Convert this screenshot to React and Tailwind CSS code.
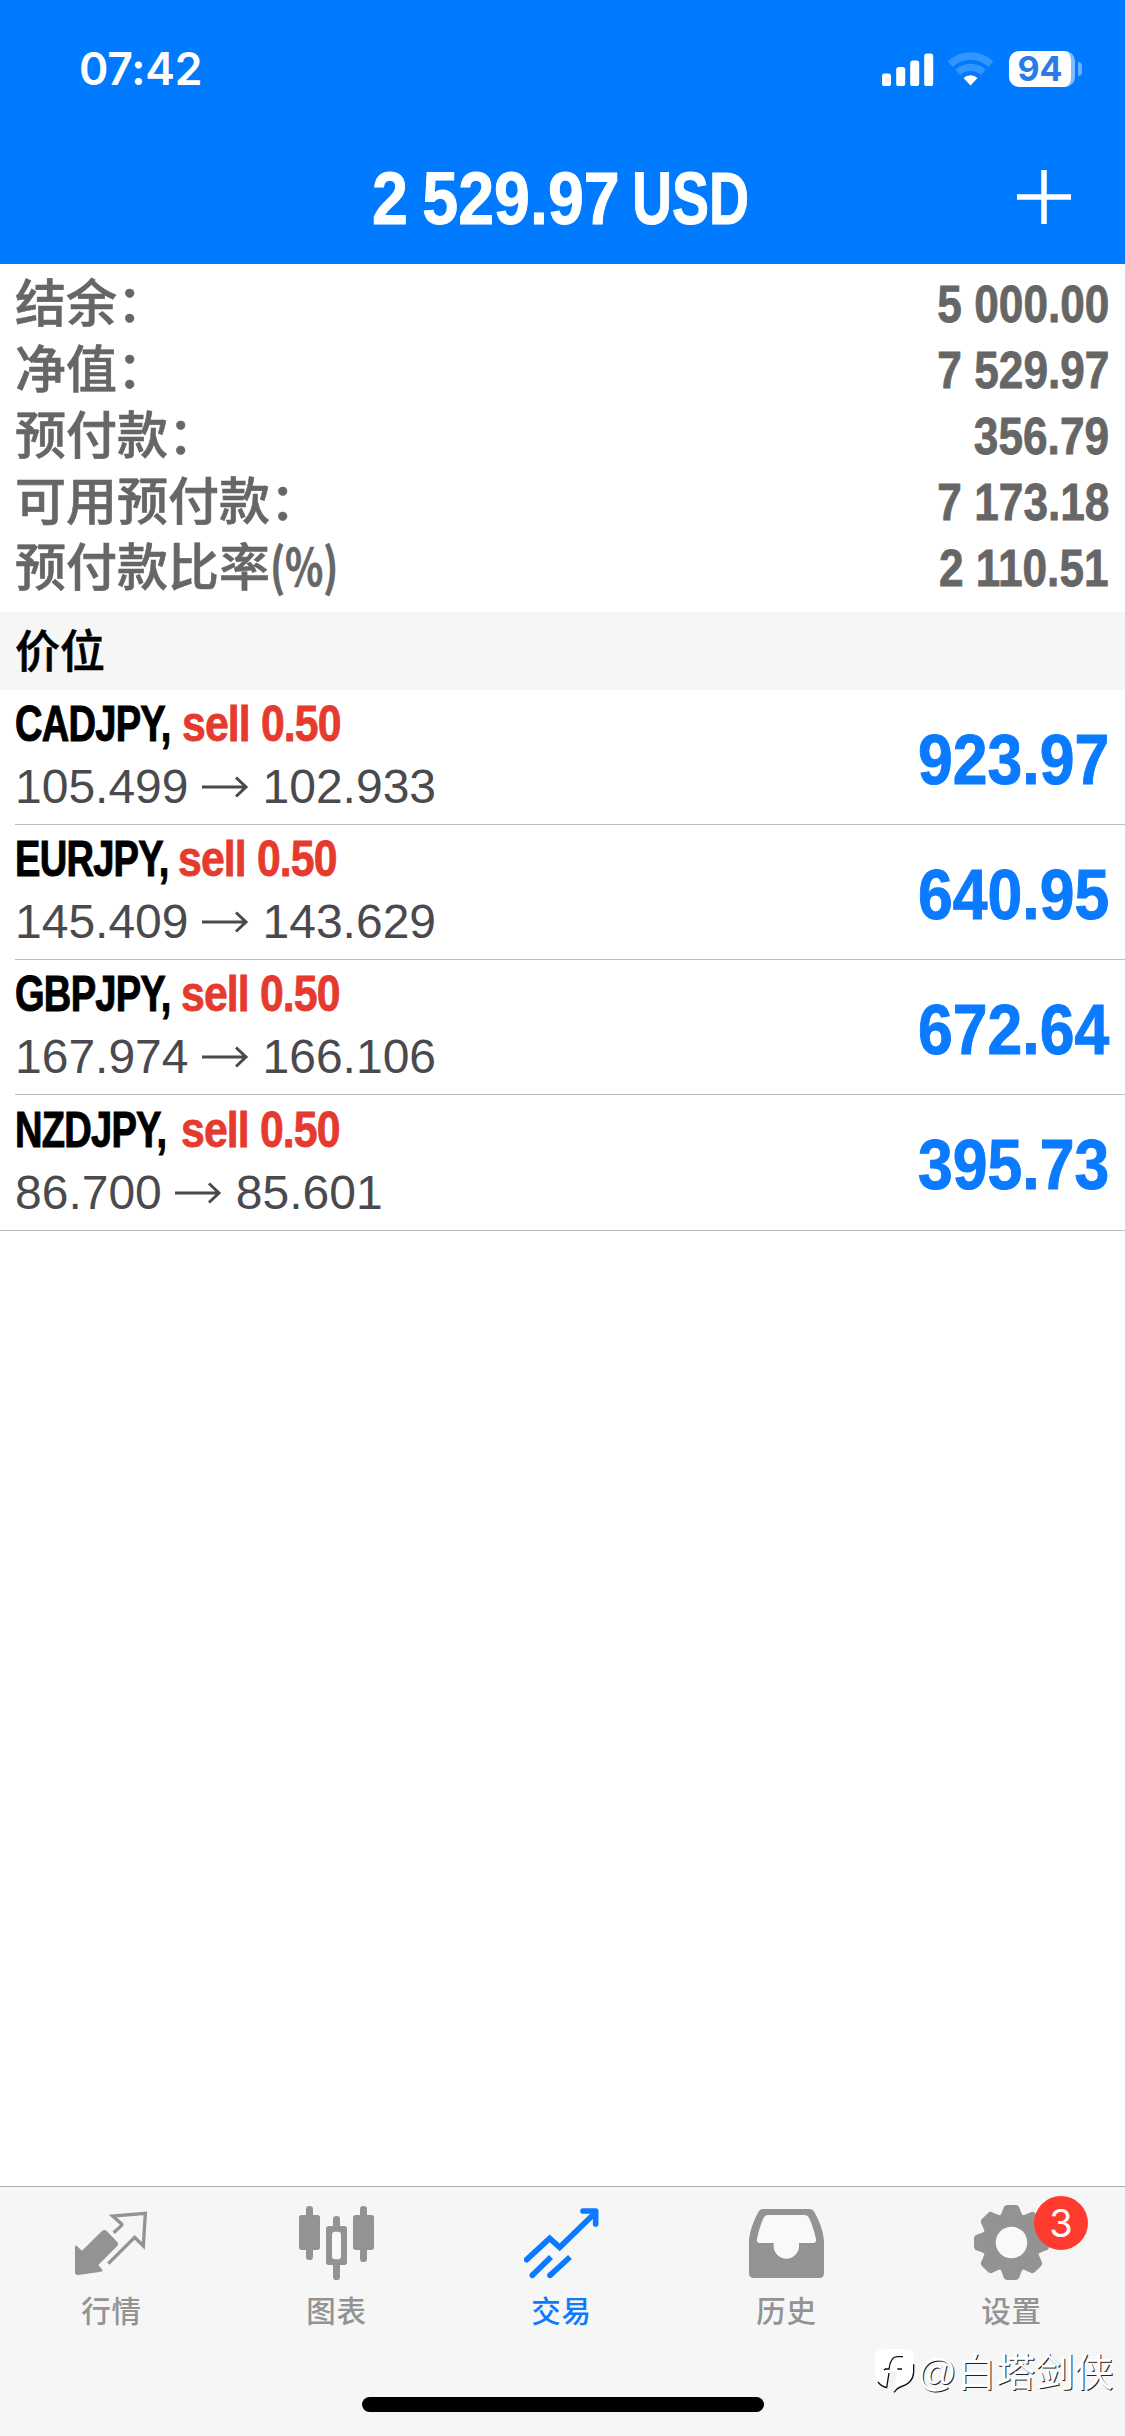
const account = [
  { label: '结余：', value: '5 000.00' },
  { label: '净值：', value: '7 529.97' },
  { label: '预付款：', value: '356.79' },
  { label: '可用预付款：', value: '7 173.18' },
  { label: '预付款比率', unit: '(%)', value: '2 110.51' },
];

// kern pulls the side text back towards the condensed symbol
const positions = [
  { symbol: 'CADJPY', kern: '-ml-[37px]', side: 'sell 0.50', open: '105.499', current: '102.933', profit: '923.97' },
  { symbol: 'EURJPY', kern: '-ml-[38px]', side: 'sell 0.50', open: '145.409', current: '143.629', profit: '640.95' },
  { symbol: 'GBPJPY', kern: '-ml-[38px]', side: 'sell 0.50', open: '167.974', current: '166.106', profit: '672.64' },
  { symbol: 'NZDJPY', kern: '-ml-[33px]', side: 'sell 0.50', open: '86.700', current: '85.601', profit: '395.73' },
];

function StatusBar() {
  return (
    <div className="flex h-[138px] items-center justify-between pl-[79px] pr-[43px]">
      <span className="font-['Inter',sans-serif] text-[44.5px] leading-none font-semibold tracking-[-0.2px]">07:42</span>
      <div className="flex items-center">
        <svg width="52" height="33" viewBox="0 0 52 33" fill="#fff">
          <rect x="0" y="20.5" width="9" height="12.5" rx="2.6" />
          <rect x="14.2" y="14" width="9" height="19" rx="2.6" />
          <rect x="28.2" y="7.5" width="9" height="25.5" rx="2.6" />
          <rect x="42.2" y="0.5" width="9" height="32.5" rx="2.6" />
        </svg>
        <svg className="ml-[14px]" width="46" height="34" viewBox="0 0 46 34" fill="none">
          <path d="M2.2 12.2a29.5 29.5 0 0 1 40.6 0" stroke="#3395ff" strokeWidth="7.5" />
          <path d="M9.6 20.4a18.8 18.8 0 0 1 25.8 0" stroke="#3395ff" strokeWidth="7.2" />
          <path d="M15.5 26a10.5 10.5 0 0 1 14 0l-7 7.5z" fill="#fff" />
        </svg>
        <div className="ml-[15px] flex items-center">
          <div className="flex h-9 w-[66px] items-center justify-center rounded-[10px] border-r-4 border-[#80bcff] bg-white">
            <span className="font-['Inter',sans-serif] text-[34px] leading-[36px] font-bold text-[#2a7be8]">94</span>
          </div>
          <div className="ml-[3px] h-[14px] w-[4px] rounded-r-full bg-[#66b0ff]" />
        </div>
      </div>
    </div>
  );
}

function Header() {
  return (
    <header className="h-[264px] bg-[#007aff] text-white">
      <StatusBar />
      <div className="flex h-[118px] items-center pl-[372px]">
        <h1 className="flex pt-[2px] text-[75px] leading-none font-bold whitespace-nowrap [-webkit-text-stroke:1px_#fff]">
          <span className="w-[260px] origin-left scale-x-[0.86] [word-spacing:-4px]">2 529.97</span>
          <span className="w-[120px] origin-left scale-x-[0.74]">USD</span>
        </h1>
        <svg className="mr-[53px] ml-auto" width="56" height="56" viewBox="0 0 56 56">
          <path d="M28 1v54M1 28h54" stroke="#fff" strokeWidth="5.5" />
        </svg>
      </div>
    </header>
  );
}

function PositionRow({ position, last }) {
  return (
    <li className={last ? 'h-[136px] border-b border-[#bebec0]' : 'ml-[15px] h-[135px] border-b border-[#bebec0]'}>
      <div className={last ? 'flex h-full items-center justify-between pr-4 pl-[15px]' : 'flex h-full items-center justify-between pr-4'}>
        <div>
          <div className="flex text-[50px] leading-[60px] font-bold tracking-[-1px] whitespace-nowrap">
            <span className="origin-left scale-x-[0.762] [-webkit-text-stroke:1px_#000]">{position.symbol},</span>
            <span className={`${position.kern} origin-left scale-x-[0.855] text-[#e63a2e] [-webkit-text-stroke:0.8px_#e63a2e]`}>
              {position.side}
            </span>
          </div>
          <div className="flex h-[66px] items-center text-[48px] leading-none text-[#4a4a4e]">
            <span>{position.open}</span>
            <svg className="mx-[13px]" width="48" height="24" viewBox="0 0 48 24" fill="none" stroke="#4a4a4e" strokeWidth="3">
              <path d="M0 12h44M34 2.5l10 9.5-10 9.5" />
            </svg>
            <span>{position.current}</span>
          </div>
        </div>
        <span className="origin-right scale-x-[0.88] pt-[4px] text-[71px] leading-none font-bold text-[#0a7aff] [-webkit-text-stroke:1px_#0a7aff]">
          {position.profit}
        </span>
      </div>
    </li>
  );
}

function QuotesIcon() {
  return (
    <svg width="75" height="75" viewBox="222 105 225 225">
      <path
        d="M228 226l18 16 60-59q8-6 15 1l30 31q6 7 0 14l-56 56 12 14q2 6-4 6l-68 10q-10 1-10-8v-77z"
        fill="#939393"
      />
      <path d="M341 188l23-21q3-3 0-6l-26-23 98-8-6 98-26-26-79 79" fill="none" stroke="#939393" strokeWidth="10" />
    </svg>
  );
}

function ChartIcon() {
  return (
    <svg width="75" height="75" viewBox="897 105 225 225" fill="#939393">
      <rect x="918" y="108" width="21" height="162" rx="10" />
      <rect x="897" y="135" width="63" height="105" rx="8" />
      <rect x="999" y="138" width="21" height="192" rx="10" />
      <rect x="978" y="168" width="63" height="117" rx="8" />
      <rect x="996" y="185" width="27" height="83" rx="9" fill="#f9f9f9" />
      <rect x="1080" y="108" width="21" height="168" rx="10" />
      <rect x="1059" y="135" width="63" height="105" rx="8" />
    </svg>
  );
}

function TradeIcon() {
  return (
    <svg width="75" height="75" viewBox="222 105 225 225" fill="none" stroke="#0a7aff" strokeWidth="17">
      <path d="M230 269l69-64 30 27 106-103" strokeLinejoin="miter" strokeLinecap="round" />
      <path d="M399 123h38v39" strokeLinecap="round" strokeLinejoin="round" />
      <path d="M247 316l56-55M300 316l60-55" />
      <g fill="#0a7aff" stroke="none">
        <circle cx="247" cy="316" r="8.5" />
        <circle cx="300" cy="316" r="8.5" />
      </g>
    </svg>
  );
}

function HistoryIcon() {
  return (
    <svg width="75" height="75" viewBox="897 105 225 225">
      <path
        fill="#939393"
        d="M940 117h138q10 0 15 9c18 32 29 65 29 90v94q0 14-14 14H911q-14 0-14-14v-94c0-25 11-58 28-90q5-9 15-9z"
      />
      <path
        fill="#f9f9f9"
        d="M953 135h111q9 0 13 8c9 20 17 42 21 65q1 11-8 11h-43v9a38 38 0 0 1-76 0v-9h-43q-9 0-7-11c4-23 11-45 20-65q4-8 12-8z"
      />
    </svg>
  );
}

function SettingsIcon() {
  return (
    <svg width="75" height="75" viewBox="-112 -112 224 224" fill="#939393">
      <circle r="84" />
      {[0, 45, 90, 135, 180, 225, 270, 315].map((angle) => (
        <path
          key={angle}
          transform={`rotate(${angle})`}
          d="M-42-72Q-31-80-27-94L-24-103Q-21-112-12-112H12Q21-112 24-103L27-94Q31-80 42-72z"
        />
      ))}
      <circle r="47" fill="#f9f9f9" />
    </svg>
  );
}

function Watermark() {
  return (
    <div className="absolute top-[161px] left-[875px] flex items-center text-white">
      <svg width="42" height="48" viewBox="30 42 126 144">
        <path
          d="M56 42h66q25 0 25 27v42q0 36-40 46l-21 16 4-22 6-34H74l-9 42q-18-4-28-26-7-12-7-32V70q0-28 26-28z"
          fill="#fff"
        />
        <path d="M74 110h20l-8 52-16-4z" fill="#f2f2f2" />
        <path
          d="M57 106l4-4h11q4-36 24-37h18M72 114l-7 44q-16-4-26-17M97 102h14M146 88v24q-2 34-40 44-12 4-19 16"
          fill="none"
          stroke="#111"
          strokeWidth="4"
        />
      </svg>
      <span className="pt-px text-[39.2px] leading-[48px] font-normal whitespace-nowrap [text-shadow:1px_1px_0_#222]">
        @白塔剑侠
      </span>
    </div>
  );
}

const tabs = [
  { label: '行情', Icon: QuotesIcon },
  { label: '图表', Icon: ChartIcon },
  { label: '交易', Icon: TradeIcon, active: true },
  { label: '历史', Icon: HistoryIcon },
  { label: '设置', Icon: SettingsIcon, badge: 3 },
];

function TabBar() {
  return (
    <footer className="relative flex h-[250px] flex-col border-t border-[#adadad] bg-[#f6f6f6]">
      <nav className="grid h-[210px] grid-cols-5 pt-[18px]">
        {tabs.map(({ label, Icon, active, badge }) => (
          <div
            key={label}
            className={`flex flex-col items-center pr-0.5 ${active ? 'text-[#0a7aff]' : 'text-[#939393]'}`}
          >
            <div className="relative">
              <Icon />
              {badge && (
                <span className="absolute -top-[9px] left-[60px] flex size-[54px] items-center justify-center rounded-full bg-[#ff3b30] font-['Inter',sans-serif] text-[38px] leading-none text-white">
                  {badge}
                </span>
              )}
            </div>
            <span className="mt-[17px] text-[29.5px] leading-[30px] font-medium tracking-[0.8px]">{label}</span>
          </div>
        ))}
      </nav>
      <div className="h-[15px] w-[402px] self-center rounded-full bg-black" />
      <Watermark />
    </footer>
  );
}

export default function App() {
  return (
    <div className="flex h-[2436px] w-[1125px] flex-col overflow-hidden bg-white font-['Liberation_Sans','Noto_Sans_CJK_SC',sans-serif]">
      <Header />
      <section className="h-[348px] pt-[6px] pr-4 pl-[15px] text-[#666]">
        {account.map((row) => (
          <div key={row.label} className="flex h-[66px] items-center justify-between">
            <span className="flex pb-[5px] font-['Noto_Sans_CJK_SC',sans-serif] text-[51px] leading-none font-medium [-webkit-text-stroke:0.6px_#666]">
              {row.label}
              {row.unit && <span className="origin-left scale-x-[0.78] font-bold">{row.unit}</span>}
            </span>
            <span className="origin-right scale-x-[0.85] pt-[2px] text-[52px] leading-none font-bold [-webkit-text-stroke:0.8px_#666]">
              {row.value}
            </span>
          </div>
        ))}
      </section>
      <div className="flex h-[78px] items-center bg-[#f6f6f6] pb-[5px] pl-[15px] font-['Noto_Sans_CJK_SC',sans-serif] text-[45px] leading-none font-medium text-black [-webkit-text-stroke:0.6px_#000]">
        价位
      </div>
      <ul className="flex-1">
        {positions.map((p, i) => (
          <PositionRow key={p.symbol} position={p} last={i === positions.length - 1} />
        ))}
      </ul>
      <TabBar />
    </div>
  );
}
